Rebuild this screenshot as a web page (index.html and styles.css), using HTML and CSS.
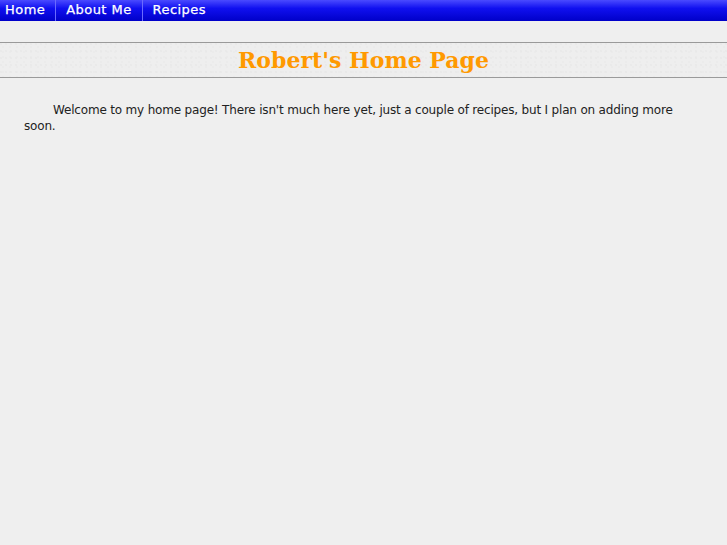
FILE: index.html
```html
<!DOCTYPE html>
<html>
<head>
<meta charset="utf-8">
<link rel="stylesheet" href="styles.css">
</head>
<body>
<nav class="nav">
  <a class="nav-item" href="#">Home</a>
  <a class="nav-item" href="#">About Me</a>
  <a class="nav-item" href="#">Recipes</a>
</nav>
<header class="banner">
  <h1 class="title">Robert's Home Page</h1>
</header>
<main class="content">
  <p class="intro">Welcome to my home page! There isn't much here yet, just a couple of recipes, but I plan on adding more soon.</p>
</main>
</body>
</html>
```
FILE: styles.css
```css
html, body {
  margin: 0;
  padding: 0;
  background: #efefef;
  font-family: "DejaVu Sans", sans-serif;
}
.nav {
  display: flex;
  height: 21px;
  background: linear-gradient(#4a4aff 0%, #1010f0 40%, #0000c8 100%);
}
.nav-item {
  color: #ffffff;
  text-decoration: none;
  font-size: 13px;
  line-height: 20px;
  padding: 0 10px;
  border-right: 1px solid #6a6aff;
  letter-spacing: 0.45px;
  -webkit-text-stroke: 0.25px #ffffff;
}
.nav-item:first-child {
  padding-left: 5px;
}
.nav-item:last-child {
  border-right: none;
}
.banner {
  margin-top: 21px;
  border-top: 1px solid #9a9a9a;
  border-bottom: 1px solid #9a9a9a;
  background-color: #eeeeee;
  background-image:
    radial-gradient(circle at 1px 1px, #e6e6e6 0.5px, transparent 1px),
    radial-gradient(circle at 3px 4px, #e8e8e8 0.5px, transparent 1px);
  background-size: 5px 7px, 7px 5px;
  height: 34px;
  display: flex;
  align-items: center;
  justify-content: center;
}
.title {
  margin: 0;
  color: #ff9900;
  font-family: "DejaVu Serif", serif;
  font-weight: bold;
  font-size: 22px;
}
.content {
  padding: 0 24px;
}
.intro {
  margin: 24px 0 0 0;
  font-size: 12px;
  line-height: 16px;
  color: #222222;
  text-indent: 29px;
  letter-spacing: -0.18px;
}
```
